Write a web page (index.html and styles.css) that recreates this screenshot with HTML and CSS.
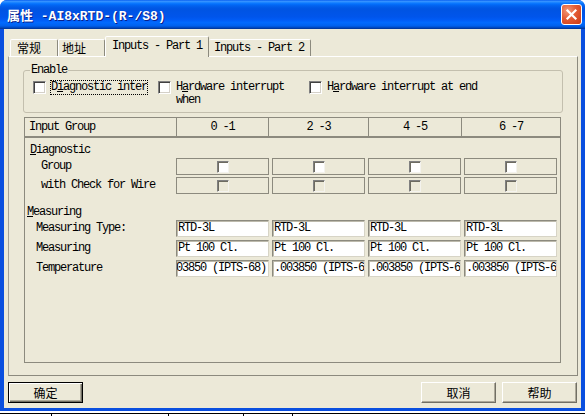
FILE: index.html
```html
<!DOCTYPE html>
<html>
<head>
<meta charset="utf-8">
<title>属性</title>
<link rel="stylesheet" href="styles.css">
</head>
<body>
<div class="window">
  <div class="titlebar">
    <span class="title">属性 -AI8xRTD-(R-/S8)</span>
    <span class="close"><svg width="19" height="19" viewBox="0 0 19 19"><path d="M5.5 5.5 L13.5 13.5 M13.5 5.5 L5.5 13.5" stroke="#fff" stroke-width="2.2" stroke-linecap="square"/></svg></span>
  </div>
  <div class="client">
    <div class="tabs">
      <div class="tab cjk t1">常规</div>
      <div class="tab cjk t2">地址</div>
      <div class="tab active t3">Inputs - Part 1</div>
      <div class="tab t4">Inputs - Part 2</div>
    </div>
    <div class="panel">
      <fieldset class="group">
        <legend>Enable</legend>
        <div class="chkrow">
          <span class="box"></span>
          <span class="lbl focus">D<u>i</u>agnostic interrupt</span>
          <span class="box b2"></span>
          <span class="lbl wrap">H<u>a</u>rdware interrupt when</span>
          <span class="box b3"></span>
          <span class="lbl">H<u>a</u>rdware interrupt at end</span>
        </div>
      </fieldset>
      <div class="table">
        <div class="thead">
          <div class="th first">Input Group</div>
          <div class="th">0 -1</div>
          <div class="th">2 -3</div>
          <div class="th">4 -5</div>
          <div class="th last">6 -7</div>
        </div>
        <div class="tbody">
          <div class="sec">
            <span class="diag"><u>D</u>iagnostic</span>
          </div>
          <div class="row">
            <div class="lab dl">Group</div>
            <div class="cbcell"><span class="cb"></span></div>
            <div class="cbcell"><span class="cb"></span></div>
            <div class="cbcell"><span class="cb"></span></div>
            <div class="cbcell"><span class="cb"></span></div>
          </div>
          <div class="row r2">
            <div class="lab dl">with Check for Wire</div>
            <div class="cbcell"><span class="cb off"></span></div>
            <div class="cbcell"><span class="cb off"></span></div>
            <div class="cbcell"><span class="cb off"></span></div>
            <div class="cbcell"><span class="cb off"></span></div>
          </div>
          <div class="sec sec2">
            <span class="meas"><u>M</u>easuring</span>
          </div>
          <div class="row">
            <div class="lab ml">Measuring Type:</div>
            <div class="inp">RTD-3L</div>
            <div class="inp">RTD-3L</div>
            <div class="inp">RTD-3L</div>
            <div class="inp">RTD-3L</div>
          </div>
          <div class="row r3">
            <div class="lab ml">Measuring</div>
            <div class="inp">Pt 100 Cl.</div>
            <div class="inp">Pt 100 Cl.</div>
            <div class="inp">Pt 100 Cl.</div>
            <div class="inp">Pt 100 Cl.</div>
          </div>
          <div class="row r3">
            <div class="lab ml">Temperature</div>
            <div class="inp end"><span>0.003850 (IPTS-68)</span></div>
            <div class="inp">.003850 (IPTS-68)</div>
            <div class="inp">.003850 (IPTS-68)</div>
            <div class="inp">.003850 (IPTS-68)</div>
          </div>
        </div>
      </div>
    </div>
    <div class="buttons">
      <button class="btn default">确定</button>
      <span class="spacer"></span>
      <button class="btn cancel">取消</button>
      <button class="btn">帮助</button>
    </div>
  </div>
</div>
<div class="desk">
  <span class="d1"></span><span class="d2"></span><span class="d3"></span><span class="d4"></span>
</div>
</body>
</html>
```

FILE: styles.css
```css
* { box-sizing: border-box; }
html, body { margin: 0; padding: 0; }
body {
  width: 585px;
  height: 416px;
  overflow: hidden;
  background: #fff;
  font-family: "Liberation Mono", "Noto Sans CJK SC", monospace;
  font-size: 12px;
  letter-spacing: -1.2px;
  color: #000;
}
u { text-decoration: underline; text-underline-offset: 1px; }

.window {
  height: 411px;
  display: flex;
  flex-direction: column;
  background: #0a4fdf;
  border-radius: 7px 7px 0 0;
}
.titlebar {
  height: 29px;
  flex: none;
  display: flex;
  align-items: center;
  padding: 0 3px 0 7px;
  border-radius: 7px 7px 0 0;
  background: linear-gradient(to bottom, #0058ee 0%, #3a93ff 4%, #288eff 7%, #127dff 10%, #036ffc 14%, #0262ee 20%, #0057e5 28%, #0054e3 34%, #0055eb 58%, #005bf5 68%, #026afe 78%, #0062ef 88%, #0052d6 93%, #0040ab 97%, #003092 100%);
}
.title {
  flex: 1;
  color: #fff;
  font-weight: bold;
  font-size: 13px;
  letter-spacing: 0;
  text-shadow: 1px 1px 0 #0a1f8a;
  padding-bottom: 1px;
}
.close {
  width: 21px;
  height: 21px;
  border: 1px solid #fff;
  border-radius: 3px;
  background: radial-gradient(circle at 30% 30%, #f29878 0%, #e35b35 45%, #cc3a14 100%);
  display: flex;
  align-items: center;
  justify-content: center;
  margin-top: -1px;
}

.client {
  flex: 1;
  background: #ece9d8;
  border: solid #0a4fdf;
  border-width: 0 4px 3px 4px;
}

.tabs {
  height: 27px;
  display: flex;
  align-items: flex-end;
  padding-left: 6px;
}
.tab {
  height: 17px;
  display: flex;
  align-items: center;
  padding-bottom: 1px;
  background: #ece9d8;
  border: 1px solid;
  border-bottom: 0;
  border-color: #fff #8c8a7e transparent #fff;
  border-radius: 2px 2px 0 0;
  white-space: nowrap;
}
.cjk { font-family: "Noto Sans CJK SC", sans-serif; letter-spacing: 0; }
.t1 { width: 48px; padding-left: 6px; }
.t2 { width: 47px; padding-left: 3px; border-left-color: #fff; }
.t3 { width: 104px; padding-left: 6px; }
.t4 { width: 102px; padding-left: 5px; border-left: 0; }
.tab.active {
  height: 21px;
  margin-bottom: -1px;
  position: relative;
  z-index: 1;
  padding-bottom: 3px;
}

.panel {
  margin-left: 4px;
  width: 570px;
  height: 320px;
  border: 1px solid;
  border-color: #fff #8c8a7e #8c8a7e #a5a295;
}

.group {
  margin: 6px 0 0 14px;
  width: 540px;
  height: 50px;
  padding: 4px 0 0 6px;
  border: 1px solid #c3bfae;
  border-radius: 3px;
}
.group legend {
  padding: 0 1px;
  line-height: 14px;
}
.chkrow {
  display: flex;
  align-items: flex-start;
  line-height: 13px;
  white-space: nowrap;
}
.box {
  flex: none;
  width: 13px;
  height: 13px;
  background: #fff;
  border: 1px solid;
  border-color: #808080 #fff #fff #808080;
  box-shadow: inset 1px 1px 0 #404040, inset -1px -1px 0 #d4d0c8;
  margin-left: 3px;
}
.box.b2 { margin-left: 10px; }
.box.b3 { margin-left: 13px; }
.lbl { margin-left: 5px; }
.lbl.focus {
  margin-left: 4px;
  margin-top: -1px;
  width: 98px;
  height: 15px;
  border: 1px dotted #000;
  overflow: hidden;
}
.lbl.wrap { width: 120px; white-space: normal; }

.table {
  margin: 4px 0 0 15px;
  width: 537px;
  height: 246px;
  border: 1px solid #8c8a7e;
}
.thead {
  display: grid;
  grid-template-columns: 152px 92px 100px 93px 98px;
  height: 20px;
  border-bottom: 2px solid #8c8a7e;
}
.th {
  line-height: 18px;
  text-align: center;
  border-right: 1px solid #8c8a7e;
}
.th.first { text-align: left; padding-left: 4px; }
.th.last { border-right: 0; }

.tbody { padding-top: 4px; }
.sec { height: 16px; line-height: 16px; }
.diag { padding-left: 5px; }
.sec2 { margin-top: 10px; }
.meas { padding-left: 2px; }
.row {
  display: grid;
  grid-template-columns: 148px repeat(4, 93px);
  column-gap: 3px;
  height: 17px;
}
.row.r2 { margin-top: 2px; }
.row.r3 { margin-top: 3px; }
.lab { line-height: 17px; white-space: nowrap; }
.lab.dl { padding-left: 16px; }
.lab.ml { padding-left: 11px; }

.cbcell {
  border: 1px solid #8c8a7e;
  display: flex;
  align-items: center;
  justify-content: center;
}
.cb {
  width: 12px;
  height: 12px;
  margin-left: 1px;
  background: #fff;
  border: 1px solid;
  border-color: #808080 #f4f3ee #f4f3ee #808080;
  box-shadow: inset 1px 1px 0 #6d6b60;
}
.cb.off { background: #ece9d8; }

.inp {
  background: #fff;
  border: 1px solid;
  border-color: #8c8a7e #d7d4c6 #d7d4c6 #8c8a7e;
  box-shadow: inset 1px 1px 0 #bdbaac;
  padding-left: 1px;
  line-height: 15px;
  white-space: nowrap;
  overflow: hidden;
}
.inp.end {
  display: flex;
  justify-content: flex-end;
  padding: 0 2px 0 0;
}
.inp.end span { flex: none; }

.buttons {
  display: flex;
  margin-top: 6px;
  padding: 0 4px 0 4px;
}
.spacer { flex: 1; }
.btn {
  width: 75px;
  height: 21px;
  padding: 0;
  font-family: "Noto Sans CJK SC", sans-serif;
  font-size: 12px;
  letter-spacing: 0;
  color: #000;
  background: #ece9d8;
  border: 1px solid;
  border-color: #fff #716f64 #716f64 #fff;
  box-shadow: inset -1px -1px 0 #aca899;
  line-height: 17px;
}
.btn.default {
  border: 1px solid #000;
  box-shadow: inset 1px 1px 0 #fff, inset -1px -1px 0 #716f64, inset -2px -2px 0 #aca899;
}
.btn.cancel { margin-right: 6px; }

.desk {
  margin-top: 2px;
  border-top: 1px solid #000;
  height: 3px;
  display: flex;
}
.desk span { height: 2px; border-right: 1px solid #000; }
.d1 { width: 52px; }
.d2 { width: 117px; }
.d3 { width: 75px; }
.d4 { width: 49px; }
```
